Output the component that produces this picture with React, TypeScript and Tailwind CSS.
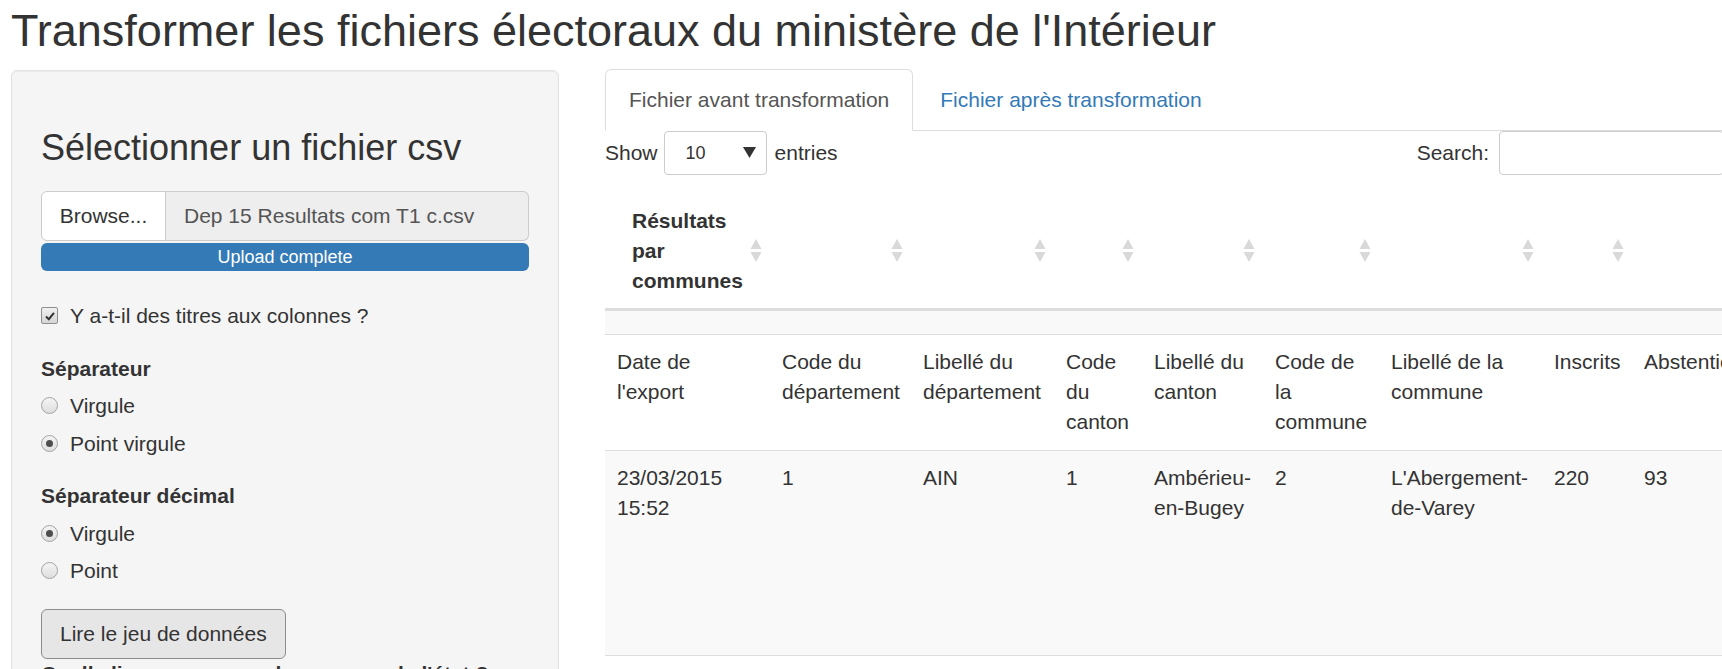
import React from 'react';

// column widths of the data table (px)
const COLS = [165, 141, 143, 88, 121, 116, 163, 90, 170, 200];

const HEADER_ROW = [
  'Date de l\'export',
  'Code du département',
  'Libellé du département',
  'Code du canton',
  'Libellé du canton',
  'Code de la commune',
  'Libellé de la commune',
  'Inscrits',
  'Abstentions',
  '% Abs/Ins',
];

const DATA_ROW = [
  '23/03/2015 15:52',
  '1',
  'AIN',
  '1',
  'Ambérieu-en-Bugey',
  '2',
  "L'Abergement-de-Varey",
  '220',
  '93',
  '42,27',
];

const SortIcon = () => (
  <svg width="12" height="25" viewBox="0 0 12 25" className="absolute right-[8px] bottom-[45px]">
    <polygon points="6,1 11.5,11 0.5,11" fill="#d9d9d9" />
    <polygon points="0.5,14 11.5,14 6,24" fill="#d9d9d9" />
  </svg>
);

const Radio = ({ checked, label }: { checked?: boolean; label: string }) => (
  <div className="flex items-center h-[30px]">
    <span className="w-[17px] h-[17px] rounded-full border border-[#a3a3a3] bg-gradient-to-b from-[#f4f4f4] to-[#dedede] flex items-center justify-center">
      {checked && <span className="w-[7px] h-[7px] rounded-full bg-[#4d4d4d]" />}
    </span>
    <span className="ml-[12px]">{label}</span>
  </div>
);

export default function App() {
  return (
    <div className="w-[1722px] h-[669px] overflow-hidden bg-white text-[#333] text-[21px] leading-[30px] font-['Liberation_Sans',Arial,sans-serif]">
      <h2 className="pl-[11px] mt-[6px] mb-[14px] text-[45px] leading-[49.5px] whitespace-nowrap">
        Transformer les fichiers électoraux du ministère de l'Intérieur
      </h2>

      <div className="flex items-start">
        {/* sidebar */}
        <div className="ml-[11px] w-[548px] h-[700px] shrink-0 rounded-[6px] border border-[#e3e3e3] bg-[#f5f5f5] shadow-[inset_0_1px_1px_rgba(0,0,0,0.05)] px-[29px] pt-[57px]">
          <h3 className="text-[36px] leading-[40px] whitespace-nowrap">Sélectionner un fichier csv</h3>

          <div className="mt-[23px] flex h-[50px]">
            <div className="w-[125px] shrink-0 flex items-center justify-center bg-white border border-[#ccc] rounded-l-[6px]">
              Browse...
            </div>
            <div className="flex-1 flex items-center pl-[18px] bg-[#eee] border border-l-0 border-[#ccc] rounded-r-[6px] text-[#555] whitespace-nowrap">
              Dep 15 Resultats com T1 c.csv
            </div>
          </div>
          <div className="mt-[2px] h-[28px] rounded-[6px] bg-[#337ab7] text-white text-[18px] leading-[28px] text-center">
            Upload complete
          </div>

          <div className="mt-[30px] flex items-center h-[30px]">
            <span className="w-[17px] h-[17px] rounded-[2px] border border-[#8f8f8f] bg-gradient-to-b from-[#f0f0f0] to-[#d6d6d6] flex items-center justify-center">
              <svg width="12" height="12" viewBox="0 0 12 12">
                <path d="M2 6.5 L4.8 9.2 L10 2.8" fill="none" stroke="#333" strokeWidth="2" />
              </svg>
            </span>
            <span className="ml-[12px]">Y a-t-il des titres aux colonnes ?</span>
          </div>

          <div className="mt-[23px] font-bold">Séparateur</div>
          <div className="mt-[7px]"><Radio label="Virgule" /></div>
          <div className="mt-[8px]"><Radio checked label="Point virgule" /></div>

          <div className="mt-[22px] font-bold">Séparateur décimal</div>
          <div className="mt-[8px]"><Radio checked label="Virgule" /></div>
          <div className="mt-[7px]"><Radio label="Point" /></div>

          <button className="mt-[23px] h-[50px] px-[18px] rounded-[6px] border border-[#8c8c8c] bg-[#e6e6e6] text-[#333]">
            Lire le jeu de données
          </button>
          <div className="font-bold whitespace-nowrap">Quelle ligne correspond aux noms de l'état ?</div>
        </div>

        {/* main panel */}
        <div className="ml-[46px] w-[1119px] shrink-0 -mt-[1px]">
          <div className="flex border-b border-[#ddd]">
            <div className="-mb-[1px] mr-[3px] px-[23px] py-[15px] border border-[#ddd] border-b-white bg-white rounded-t-[6px] text-[#555] whitespace-nowrap">
              Fichier avant transformation
            </div>
            <div className="-mb-[1px] px-[23px] py-[15px] border border-transparent text-[#337ab7] whitespace-nowrap">
              Fichier après transformation
            </div>
          </div>

          <div className="h-[44px] flex items-center justify-between">
            <div className="flex items-center">
              <span>Show</span>
              <div className="ml-[6px] w-[103px] h-[44px] border border-[#ccc] rounded-[4px] flex items-center justify-between pl-[21px] pr-[10px] text-[18px]">
                <span>10</span>
                <svg width="13" height="11" viewBox="0 0 13 11">
                  <polygon points="0,0 13,0 6.5,11" fill="#333" />
                </svg>
              </div>
              <span className="ml-[8px]">entries</span>
            </div>
            <div className="flex items-center">
              <span>Search:</span>
              <div className="ml-[10px] w-[225px] h-[44px] border border-[#ccc] rounded-[4px]" />
            </div>
          </div>

          <table className="mt-[1px] table-fixed border-separate border-spacing-0 w-[1397px]">
            <colgroup>
              {COLS.map((w, i) => (
                <col key={i} style={{ width: w }} />
              ))}
            </colgroup>
            <thead>
              <tr>
                {COLS.map((_, i) => (
                  <th
                    key={i}
                    className="relative h-[135px] align-bottom text-left font-bold pl-[27px] pr-[15px] pb-[12px] border-b-[3px] border-[#ddd]"
                  >
                    {i === 0 ? 'Résultats par communes' : ''}
                    <SortIcon />
                  </th>
                ))}
              </tr>
            </thead>
            <tbody>
              <tr>
                {COLS.map((_, i) => (
                  <td key={i} className="h-[23px] bg-[#f9f9f9] p-0" />
                ))}
              </tr>
              <tr>
                {HEADER_ROW.map((t, i) => (
                  <td key={i} className="h-[116px] align-top px-[12px] pt-[12px] border-t border-[#ddd] bg-white">
                    {t}
                  </td>
                ))}
              </tr>
              <tr>
                {DATA_ROW.map((t, i) => (
                  <td key={i} className="h-[206px] align-top px-[12px] pt-[12px] border-t border-b border-[#ddd] bg-[#f9f9f9]">
                    {t}
                  </td>
                ))}
              </tr>
            </tbody>
          </table>
        </div>
      </div>
    </div>
  );
}
